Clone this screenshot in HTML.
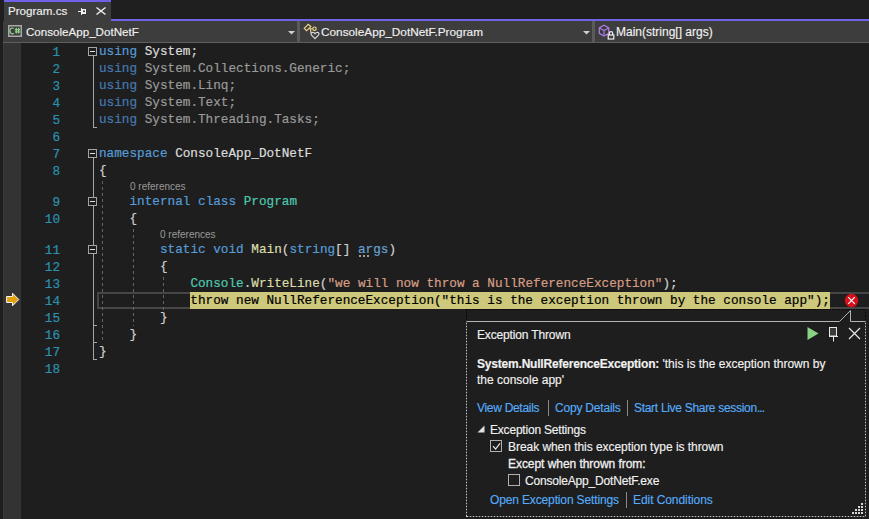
<!DOCTYPE html>
<html><head><meta charset="utf-8">
<style>
*{margin:0;padding:0;box-sizing:border-box}
html,body{width:869px;height:519px;overflow:hidden;background:#1e1e1e}
body{position:relative;font-family:"Liberation Sans",sans-serif}
.a{position:absolute}
.ui{font-family:"Liberation Sans",sans-serif;font-size:12px;color:#f1f1f1;white-space:nowrap;line-height:16px;-webkit-text-stroke:0.15px currentColor}
.code{position:absolute;left:99px;font-family:"Liberation Mono",monospace;font-size:12.69px;-webkit-text-stroke:0.2px currentColor;line-height:17px;height:17px;white-space:pre;color:#dcdcdc}
.ln{position:absolute;left:21px;margin-top:1px;-webkit-text-stroke:0.2px currentColor;width:39px;text-align:right;font-family:"Liberation Mono",monospace;font-size:12.69px;line-height:17px;height:17px;color:#2b91af}
.k{color:#569cd6}.t{color:#4ec9b0}.m{color:#dcdcaa}.s{color:#d69d85}.p{color:#d0d0d0}.pa{color:#9cdcfe}
.fk{color:#4679b0}.fi{color:#9a9a9a}.fp{color:#7d7d7d}
.cl{position:absolute;margin-top:1px;font-family:"Liberation Sans",sans-serif;font-size:10px;line-height:14px;height:14px;color:#999;white-space:nowrap}
.box{position:absolute;left:88px;width:9px;height:9px;border:1px solid #a5a5a5;background:#1e1e1e}
.box:after{content:"";position:absolute;left:1px;top:3px;width:5px;height:1px;background:#e0e0e0}
.vl{position:absolute;left:93px;width:1px;background:#a5a5a5}
.tick{position:absolute;left:93px;width:4px;height:1px;background:#a5a5a5}
.guide{position:absolute;width:1px;background:repeating-linear-gradient(to bottom,#646464 0,#646464 3px,transparent 3px,transparent 6px)}
.link{color:#55abf8}
</style></head><body>

<!-- top environment strip -->
<div class="a" style="left:0;top:0;width:869px;height:21px;background:#1f1f1f"></div>
<!-- tab -->
<div class="a" style="left:4px;top:0;width:107px;height:21px;background:#3d3d3d;border-top:2px solid #7160e8"></div>
<div class="a ui" style="left:8px;top:3px;font-size:11.6px">Program.cs</div>
<svg class="a" style="left:0;top:0" width="120" height="20">
 <rect x="78" y="11" width="3" height="1" fill="#f0f0f0"/>
 <rect x="81" y="8" width="1" height="7" fill="#f0f0f0"/>
 <rect x="82" y="9" width="4" height="5" fill="#f0f0f0"/><rect x="83" y="10.5" width="2" height="1.5" fill="#3d3d3d"/>
 <path d="M96.5 7.5L105.5 14.5M105.5 7.5L96.5 14.5" stroke="#f0f0f0" stroke-width="1.4"/>
</svg>
<!-- purple line -->
<div class="a" style="left:111px;top:19px;width:758px;height:2px;background:#7160e8"></div>

<!-- nav bar -->
<div class="a" style="left:3px;top:21px;width:866px;height:21px;background:#3d3d3d"></div>
<div class="a" style="left:3px;top:42px;width:866px;height:1px;background:#5e5e5e"></div>
<div class="a" style="left:297px;top:21px;width:3px;height:21px;background:#5a5a5a"></div>
<div class="a" style="left:592px;top:21px;width:3px;height:21px;background:#5a5a5a"></div>
<!-- C# icon -->
<svg class="a" style="left:0;top:20px" width="30" height="20">
 <rect x="8.75" y="5.75" width="12.5" height="10.5" fill="none" stroke="#a8a8a8" stroke-width="1.5"/>
 <path d="M13.8 8.6A2.4 2.9 0 1 0 13.8 13.2" fill="none" stroke="#8fd48f" stroke-width="1.2"/>
 <path d="M16.3 7.8V13.6M18.6 7.8V13.6M14.9 9.6H20.1M14.9 11.8H20.1" stroke="#8fd48f" stroke-width="1.2"/>
</svg>
<div class="a ui" style="left:26px;top:24px;font-size:11.6px">ConsoleApp_DotNetF</div>
<svg class="a" style="left:288px;top:31px" width="7" height="4"><path d="M0 0H7L3.5 3.5Z" fill="#d0d0d0"/></svg>
<!-- class icon -->
<svg class="a" style="left:300px;top:21px" width="22" height="21" viewBox="0 0 22 21">
 <path d="M4.2 7.3L8.3 3.4L10.8 5.6L6.6 9.6Z" fill="none" stroke="#f2d98e" stroke-width="1.15"/>
 <path d="M8.8 7.7H12.8M10.7 7.7V11.8" fill="none" stroke="#f2d98e" stroke-width="1.15"/>
 <circle cx="14.5" cy="7.7" r="1.7" fill="none" stroke="#f2d98e" stroke-width="1.15"/>
 <path d="M15 17.6L11.6 14.2C10.6 13.1 10.9 11.6 12.3 11.4C13.5 11.2 14.5 11.9 15 12.7C15.5 11.9 16.5 11.2 17.7 11.4C19.1 11.6 19.4 13.1 18.4 14.2Z" fill="#3d3d3d" stroke="#dadada" stroke-width="1.15"/>
</svg>
<div class="a ui" style="left:321px;top:24px;font-size:11.8px">ConsoleApp_DotNetF.Program</div>
<svg class="a" style="left:583px;top:31px" width="7" height="4"><path d="M0 0H7L3.5 3.5Z" fill="#d0d0d0"/></svg>
<!-- method icon -->
<svg class="a" style="left:595px;top:21px" width="22" height="21" viewBox="0 0 22 21">
 <path d="M9 4.2L13.7 6.9V12.4L9 15.1L4.3 12.4V6.9Z" fill="#383838" stroke="#a97be3" stroke-width="1.3"/>
 <path d="M4.3 6.9L9 9.6L13.7 6.9M9 9.6V15.1" fill="none" stroke="#a97be3" stroke-width="1.2"/>
 <path d="M14.3 14V12.3A1.7 1.7 0 0 1 17.7 12.3V14" fill="none" stroke="#f0f0f0" stroke-width="1.2"/>
 <rect x="13.2" y="14" width="5.6" height="4" fill="#3d3d3d" stroke="#f0f0f0" stroke-width="1.2"/>
</svg>
<div class="a ui" style="left:616px;top:24px">Main(string[] args)</div>

<!-- glyph margin -->
<div class="a" style="left:0;top:43px;width:3px;height:476px;background:#1e1e1e"></div>
<div class="a" style="left:3px;top:43px;width:18px;height:476px;background:#333333"></div>
<div class="a" style="left:3px;top:43px;width:1px;height:476px;background:#3a3a3a"></div>

<!-- line numbers -->
<div class="ln" style="top:43px">1</div>
<div class="ln" style="top:60px">2</div>
<div class="ln" style="top:77px">3</div>
<div class="ln" style="top:94px">4</div>
<div class="ln" style="top:111px">5</div>
<div class="ln" style="top:128px">6</div>
<div class="ln" style="top:145px">7</div>
<div class="ln" style="top:162px">8</div>
<div class="ln" style="top:193px">9</div>
<div class="ln" style="top:210px">10</div>
<div class="ln" style="top:241px">11</div>
<div class="ln" style="top:258px">12</div>
<div class="ln" style="top:275px">13</div>
<div class="ln" style="top:292px">14</div>
<div class="ln" style="top:309px">15</div>
<div class="ln" style="top:326px">16</div>
<div class="ln" style="top:343px">17</div>
<div class="ln" style="top:360px">18</div>

<!-- current line border -->
<div class="a" style="left:97px;top:292px;width:772px;height:17px;border:2px solid #464646;border-right:none"></div>

<!-- guides -->
<div class="guide" style="left:102px;top:181px;height:159px"></div>
<div class="guide" style="left:133px;top:229px;height:97px"></div>
<div class="guide" style="left:163px;top:277px;height:33px"></div>

<!-- outlining -->
<div class="vl" style="top:56px;height:72px"></div>
<div class="tick" style="top:127px"></div>
<div class="vl" style="top:158px;height:202px"></div>
<div class="tick" style="top:325px"></div>
<div class="tick" style="top:342px"></div>
<div class="tick" style="top:359px"></div>
<div class="box" style="top:47px"></div>
<div class="box" style="top:149px"></div>
<div class="box" style="top:197px"></div>
<div class="box" style="top:245px"></div>

<!-- code -->
<div class="code" style="top:43px"><span class="k">using</span> System<span class="p">;</span></div>
<div class="code" style="top:60px"><span class="fk">using</span> <span class="fi">System.Collections.Generic;</span></div>
<div class="code" style="top:77px"><span class="fk">using</span> <span class="fi">System.Linq;</span></div>
<div class="code" style="top:94px"><span class="fk">using</span> <span class="fi">System.Text;</span></div>
<div class="code" style="top:111px"><span class="fk">using</span> <span class="fi">System.Threading.Tasks;</span></div>
<div class="code" style="top:145px"><span class="k">namespace</span> ConsoleApp_DotNetF</div>
<div class="code" style="top:162px"><span class="p">{</span></div>
<div class="cl" style="top:179px;left:130px">0 references</div>
<div class="code" style="top:193px">    <span class="k">internal</span> <span class="k">class</span> <span class="t">Program</span></div>
<div class="code" style="top:210px">    <span class="p">{</span></div>
<div class="cl" style="top:227px;left:160px">0 references</div>
<div class="code" style="top:241px">        <span class="k">static</span> <span class="k">void</span> <span class="m">Main</span><span class="p">(</span><span class="k">string</span><span class="p">[]</span> <span class="pa" style="color:#66a2d2">args</span><span class="p">)</span></div>
<div class="code" style="top:258px">        <span class="p">{</span></div>
<div class="code" style="top:275px">            <span class="t">Console</span><span class="p">.</span><span class="m">WriteLine</span><span class="p">(</span><span class="s">"we will now throw a NullReferenceException"</span><span class="p">);</span></div>
<div class="a" style="left:190px;top:292px;width:640px;height:17px;background:#cdc87b"></div>
<div class="code" style="top:292px;color:#000">            throw new NullReferenceException("this is the exception thrown by the console app");</div>
<div class="code" style="top:309px">        <span class="p">}</span></div>
<div class="code" style="top:326px">    <span class="p">}</span></div>
<div class="code" style="top:343px"><span class="p">}</span></div>
<!-- suggestion dots under args -->
<div class="a" style="left:359px;top:255px;width:2px;height:2px;background:#a0a0a0;box-shadow:4px 0 0 #a0a0a0,8px 0 0 #a0a0a0"></div>

<!-- current statement arrow -->
<svg class="a" style="left:5px;top:292px" width="15" height="15" viewBox="0 0 15 15">
 <path d="M1.6 4.5H7.5V1.2L13.8 7.5L7.5 13.8V10.5H1.6Z" fill="#e2a00a" stroke="#f5f5f5" stroke-width="1"/>
</svg>

<!-- error icon -->
<svg class="a" style="left:844px;top:293px" width="15" height="15" viewBox="0 0 15 15">
 <circle cx="7.5" cy="7.5" r="6.7" fill="#d6101b"/>
 <path d="M4.2 4.2L10.8 10.8M10.8 4.2L4.2 10.8" stroke="#fff" stroke-width="1.2"/>
</svg>

<!-- popup -->
<div class="a" style="left:466px;top:309px;width:400px;height:1px;background:repeating-linear-gradient(to right,#0a0a0a 0 2px,transparent 2px 3px)"></div>
<div class="a" style="left:466px;top:309px;width:1px;height:12px;background:repeating-linear-gradient(to bottom,#0a0a0a 0 2px,transparent 2px 3px)"></div>
<div class="a" style="left:865px;top:309px;width:1px;height:12px;background:repeating-linear-gradient(to bottom,#0a0a0a 0 2px,transparent 2px 3px)"></div>
<svg class="a" style="left:0;top:0" width="869" height="519">
 <path d="M466.5 321.5H839.5L850.5 310.5V321.5H865.5" fill="none" stroke="#b4b4b4" stroke-width="1"/>
</svg>
<div class="a" style="left:466px;top:322px;width:1px;height:195px;background:repeating-linear-gradient(to bottom,#c8c8c8 0 1px,#4a4a4a 1px 3px);background-position:1px 1px"></div>
<div class="a" style="left:865px;top:322px;width:1px;height:195px;background:repeating-linear-gradient(to bottom,#c8c8c8 0 1px,#4a4a4a 1px 3px);background-position:1px 1px"></div>
<div class="a" style="left:466px;top:516px;width:400px;height:1px;background:repeating-linear-gradient(to right,#c8c8c8 0 1px,#4a4a4a 1px 3px);background-position:1px 1px"></div>
<div class="a ui" style="left:477px;top:327px;letter-spacing:-0.15px">Exception Thrown</div>
<svg class="a" style="left:806px;top:326px" width="14" height="15"><path d="M1.5 1L12.5 7.5L1.5 14Z" fill="#89d185"/></svg>
<svg class="a" style="left:828px;top:326px" width="11" height="16" viewBox="0 0 11 16">
 <rect x="1.5" y="1.5" width="7" height="8.5" fill="#3a3a3a" stroke="#e8e8e8" stroke-width="1"/>
 <path d="M1 10.5H10M5.5 10.5V15.5" stroke="#e8e8e8" stroke-width="1"/>
</svg>
<svg class="a" style="left:848px;top:327px" width="13" height="13"><path d="M1 1L12 12M12 1L1 12" stroke="#e8e8e8" stroke-width="1.2"/></svg>

<div class="a ui" style="left:477px;top:356px;width:370px;white-space:normal"><b style="letter-spacing:-0.2px">System.NullReferenceException:</b> 'this is the exception thrown by<br>the console app'</div>

<div class="a ui link" style="left:477px;top:400px;letter-spacing:-0.3px">View Details</div>
<div class="a" style="left:548px;top:400px;width:1px;height:16px;background:#8a8a8a"></div>
<div class="a ui link" style="left:555px;top:400px;letter-spacing:-0.2px">Copy Details</div>
<div class="a" style="left:627px;top:400px;width:1px;height:16px;background:#8a8a8a"></div>
<div class="a ui link" style="left:634px;top:400px;letter-spacing:-0.3px">Start Live Share session<span style="letter-spacing:-0.9px">...</span></div>

<svg class="a" style="left:477px;top:425px" width="8" height="8"><path d="M7.5 0.5V7.5H0.5Z" fill="#e0e0e0"/></svg>
<div class="a ui" style="left:490px;top:422px;letter-spacing:-0.2px">Exception Settings</div>
<svg class="a" style="left:490px;top:440px" width="13" height="13" viewBox="0 0 13 13">
 <rect x="0.5" y="0.5" width="11" height="11" fill="none" stroke="#b0b0b0" stroke-width="1"/>
 <path d="M3 6.2L5.6 9L10 3.3" fill="none" stroke="#e8e8e8" stroke-width="1.2"/>
</svg>
<div class="a ui" style="left:508px;top:439px;letter-spacing:-0.05px">Break when this exception type is thrown</div>
<div class="a ui" style="left:508px;top:456px;letter-spacing:-0.05px;-webkit-text-stroke:0.3px #f1f1f1">Except when thrown from:</div>
<svg class="a" style="left:508px;top:474px" width="13" height="13"><rect x="0.5" y="0.5" width="11" height="11" fill="none" stroke="#b0b0b0" stroke-width="1"/></svg>
<div class="a ui" style="left:525px;top:473px;letter-spacing:-0.18px">ConsoleApp_DotNetF.exe</div>
<div class="a ui link" style="left:490px;top:492px;letter-spacing:-0.14px">Open Exception Settings</div>
<div class="a" style="left:626px;top:492px;width:1px;height:16px;background:#8a8a8a"></div>
<div class="a ui link" style="left:633px;top:492px;letter-spacing:-0.07px">Edit Conditions</div>
<!-- resize grip -->
<svg class="a" style="left:852px;top:503px" width="12" height="12">
 <g fill="#d8d8d8">
  <rect x="9" y="0" width="2" height="2"/>
  <rect x="6" y="3" width="2" height="2"/><rect x="9" y="3" width="2" height="2"/>
  <rect x="3" y="6" width="2" height="2"/><rect x="6" y="6" width="2" height="2"/><rect x="9" y="6" width="2" height="2"/>
  <rect x="0" y="9" width="2" height="2"/><rect x="3" y="9" width="2" height="2"/><rect x="6" y="9" width="2" height="2"/><rect x="9" y="9" width="2" height="2"/>
 </g>
</svg>
</body></html>
